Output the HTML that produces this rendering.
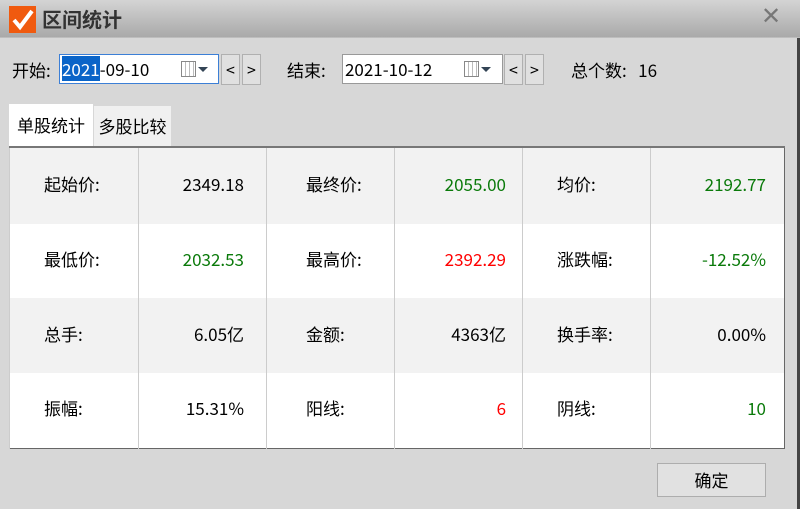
<!DOCTYPE html>
<html><head><meta charset="utf-8"><style>
*{margin:0;padding:0;box-sizing:border-box}
body{width:800px;height:509px;background:#d7d7d7;font-family:"Noto Sans CJK SC","Liberation Sans",sans-serif;color:#000;position:relative;overflow:hidden}
.title{position:absolute;left:0;top:0;width:800px;height:38px;background:linear-gradient(#d4d4d4,#a9a9a9);border-bottom:1px solid #bdbdbd}
.chk{position:absolute;left:9px;top:6px;width:27px;height:27px;background:#f05a0f}
.title .t{position:absolute;left:42px;top:4px;font-size:20px;font-weight:bold;color:#333;line-height:30px}
.x{position:absolute;left:761px;top:2px;font-size:24px;color:#777;font-family:"Liberation Sans",sans-serif}
.rb{position:absolute;left:797px;top:38px;width:3px;height:471px;background:#444}
.lab{position:absolute;font-size:17px;top:57px;line-height:26px}
.inp{position:absolute;top:54px;height:30px;background:#fff;border:1px solid #999;font-size:17px;line-height:27px;padding-left:2px}
.nav{position:absolute;top:54px;width:19px;height:31px;background:#e0e0e0;border:1px solid #b0b0b0;font-size:16px;text-align:center;line-height:28px}
.cal{position:absolute;top:6px;width:15px;height:16px;border:1px solid #888;background:repeating-linear-gradient(90deg,#fff 0 3px,#bbb 3px 4px),#fff}
.tri{position:absolute;top:12px;width:0;height:0;border-left:5px solid transparent;border-right:5px solid transparent;border-top:5px solid #345}
.tab{position:absolute;top:104px;height:42px;font-size:17px;line-height:42px;text-align:center}
table{position:absolute;left:9px;top:146px;width:775px;height:303px;border-collapse:collapse;border:1px solid #666;border-top:2px solid #777;background:#fff;table-layout:fixed}
td{border-left:1px solid #ccc;font-size:17px;line-height:24px;padding-bottom:4px}
td:nth-child(odd){padding-left:34px}
td:nth-child(3){padding-left:39px}
td:nth-child(even){text-align:right;padding-right:22px}
td:nth-child(4){padding-right:16px}
td:nth-child(6){padding-right:18px}
tr.g td{background:#f2f2f2}
.gr{color:#0a7a0a}.rd{color:#f00}
.btn{position:absolute;left:657px;top:463px;width:109px;height:34px;background:#e1e1e1;border:1px solid #adadad;font-size:17px;text-align:center;line-height:32px}
</style></head><body>
<div class="title"><div class="chk"><svg width="27" height="27"><path d="M5 14 L11 21 L23 5" stroke="#fff" stroke-width="4" fill="none"/></svg></div><div class="t">区间统计</div><div class="x">✕</div></div>
<div class="rb"></div>
<div class="lab" style="left:12px">开始:</div>
<div class="inp" style="left:59px;width:160px;border-color:#3c7fd6"><span style="background:#0a64c8;color:#fff">2021</span>-09-10<div class="cal" style="left:121px"></div><div class="tri" style="left:138px"></div></div>
<div class="nav" style="left:221px">&lt;</div><div class="nav" style="left:242px">&gt;</div>
<div class="lab" style="left:287px">结束:</div>
<div class="inp" style="left:342px;width:161px">2021-10-12<div class="cal" style="left:121px"></div><div class="tri" style="left:138px"></div></div>
<div class="nav" style="left:504px">&lt;</div><div class="nav" style="left:525px">&gt;</div>
<div class="lab" style="left:571px">总个数:&nbsp;&nbsp; 16</div>
<div class="tab" style="left:9px;width:84px;background:#fff">单股统计</div>
<div class="tab" style="left:94px;width:77px;top:106px;height:40px;background:#f0f0f0;line-height:40px">多股比较</div>
<table>
<colgroup><col style="width:129px"><col style="width:128px"><col style="width:128px"><col style="width:128px"><col style="width:128px"><col style="width:134px"></colgroup>
<tr class="g"><td>起始价:</td><td>2349.18</td><td>最终价:</td><td class="gr">2055.00</td><td>均价:</td><td class="gr">2192.77</td></tr>
<tr><td>最低价:</td><td class="gr">2032.53</td><td>最高价:</td><td class="rd">2392.29</td><td>涨跌幅:</td><td class="gr">-12.52%</td></tr>
<tr class="g"><td>总手:</td><td>6.05亿</td><td>金额:</td><td>4363亿</td><td>换手率:</td><td>0.00%</td></tr>
<tr><td>振幅:</td><td>15.31%</td><td>阳线:</td><td class="rd">6</td><td>阴线:</td><td class="gr">10</td></tr>
</table>
<div class="btn">确定</div>
</body></html>
